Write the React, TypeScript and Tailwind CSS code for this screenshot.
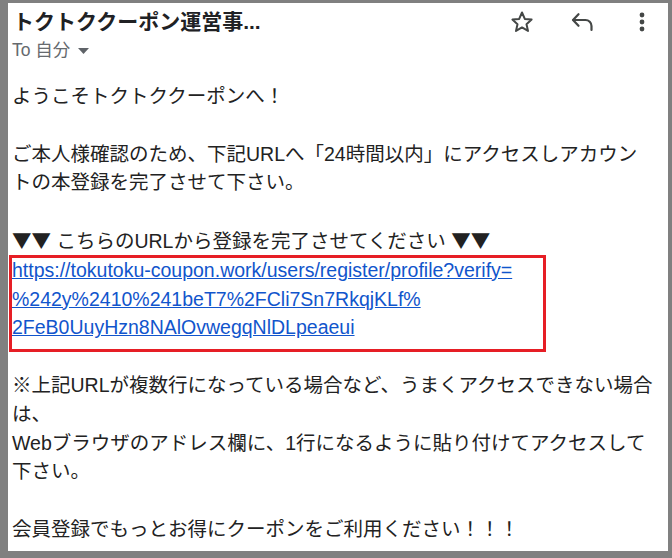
import type { ReactNode } from "react";

const font = { fontFamily: '"Liberation Sans", "Noto Sans CJK JP", sans-serif' };
const cjk = { fontFamily: '"Noto Sans CJK JP", sans-serif' };

function StarIcon() {
  return (
    <svg width="24" height="24" viewBox="0 0 24 24" fill="none" stroke="#444746" strokeWidth="2" strokeLinejoin="round">
      <polygon points="12,2.5 14.8,8.9 21.6,9.6 16.5,14.2 18,20.9 12,17.4 6,20.9 7.5,14.2 2.4,9.6 9.2,8.9" />
    </svg>
  );
}

function ReplyIcon() {
  return (
    <svg width="24" height="24" viewBox="0 0 24 24" fill="none" stroke="#444746" strokeWidth="2.2" strokeLinecap="round" strokeLinejoin="round">
      <path d="M8.5 4.2 3 10l5.5 5.8" />
      <path d="M3.5 10H15.5a6 6 0 0 1 6 6v4" />
    </svg>
  );
}

function MoreIcon() {
  return (
    <svg width="24" height="24" viewBox="0 0 24 24" fill="#444746">
      <circle cx="12" cy="5" r="2.4" />
      <circle cx="12" cy="12" r="2.4" />
      <circle cx="12" cy="19" r="2.4" />
    </svg>
  );
}

function Para({ children, first }: { children: ReactNode; first?: boolean }) {
  return <p className={`whitespace-nowrap ${first ? "" : "mt-[28.8px]"}`}>{children}</p>;
}

export default function App() {
  return (
    <div className="h-[558px] w-[672px] bg-[#808080] pb-[7px] pl-[8px] pr-[4px] pt-[3px]" style={font}>
      <div className="h-full w-full overflow-hidden bg-white pl-[4px] pt-[5px]">
        <div className="flex items-start">
          <h1 className="whitespace-nowrap pl-px text-[21px] font-bold leading-[28px] text-[#202124]">
            トクトククーポン運営事...
          </h1>
          <div className="ml-auto mt-[2px] flex items-center gap-[36px] pr-[14px]">
            <StarIcon />
            <ReplyIcon />
            <MoreIcon />
          </div>
        </div>

        <div className="mt-[2px] flex items-center text-[17.5px] leading-[24px] text-[#666a6e]">
          <span>To 自分</span>
          <svg className="ml-[8px] mt-[2px]" width="11" height="6" viewBox="0 0 11 6" fill="#5f6368">
            <polygon points="0,0 11,0 5.5,6" />
          </svg>
        </div>

        <div className="mt-[20px] text-[19.5px] leading-[28.8px] text-[#222222]">
          <Para first>ようこそトクトククーポンへ！</Para>
          <Para>
            ご本人様確認のため、下記URLへ「24時間以内」にアクセスしアカウン
            <br />
            トの本登録を完了させて下さい。
          </Para>
          <Para>
            <span style={cjk}>▼▼</span> こちらのURLから登録を完了させてください <span style={cjk}>▼▼</span>
          </Para>
          <div className="relative">
            <a className="block whitespace-nowrap text-[#1155cc] underline" href="#">
              https://tokutoku-coupon.work/users/register/profile?verify=
              <br />
              %242y%2410%241beT7%2FCli7Sn7RkqjKLf%
              <br />
              2FeB0UuyHzn8NAlOvwegqNlDLpeaeui
            </a>
            <div className="absolute left-[-3px] top-[-1px] h-[97px] w-[537px] border-[3px] border-[#e61e25]" />
          </div>
          <Para>
            ※上記URLが複数行になっている場合など、うまくアクセスできない場合
            <br />
            は、
            <br />
            Webブラウザのアドレス欄に、1行になるように貼り付けてアクセスして
            <br />
            下さい。
          </Para>
          <Para>会員登録でもっとお得にクーポンをご利用ください！！！</Para>
        </div>
      </div>
    </div>
  );
}
